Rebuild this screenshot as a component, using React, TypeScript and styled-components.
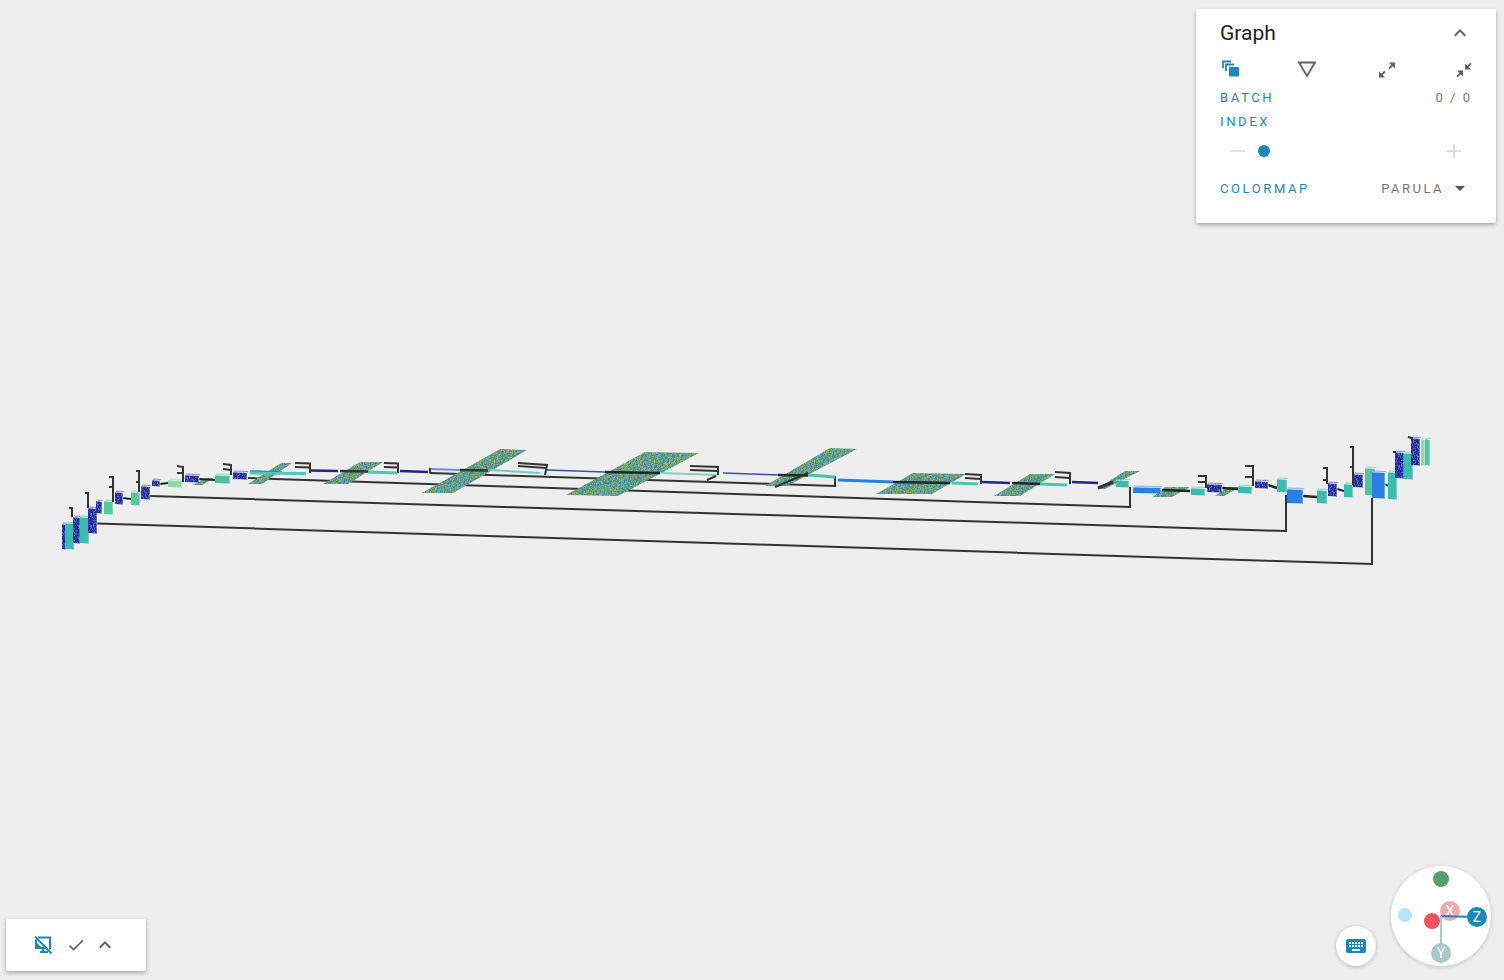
import * as React from 'react'
import styled, { createGlobalStyle } from 'styled-components'
import { MdCheck, MdExpandLess, MdKeyboard } from 'react-icons/md'

const accent = '#1c88b8'
const iconGrey = '#5f5f5f'

const GlobalStyle = createGlobalStyle`
  html, body {
    margin: 0;
    padding: 0;
    background: #eeeeee;
    overflow: hidden;
    font-family: Roboto, "Liberation Sans", sans-serif;
  }
`

const Page = styled.div`
  position: relative;
  width: 1504px;
  height: 980px;
  background: #eeeeee;
  overflow: hidden;
`

const Canvas = styled.svg`
  display: block;
  width: 1504px;
  height: 980px;
  filter: blur(0.35px);
`

const GraphPanel = styled.section`
  position: absolute;
  top: 9px;
  left: 1196px;
  width: 300px;
  height: 214px;
  box-sizing: border-box;
  padding: 8px 24px 0;
  background: #fff;
  border-radius: 2px;
  box-shadow: 0 2px 4px rgba(0, 0, 0, 0.3);
`

const Header = styled.div`
  display: flex;
  align-items: center;
  justify-content: space-between;
  height: 32px;
`

const Title = styled.div`
  font-size: 21px;
  color: #212121;
`

const IconRow = styled.div`
  display: flex;
  align-items: center;
  justify-content: space-between;
  height: 24px;
  margin: 8px -2px 4px 0;
`

const IconSlot = styled.svg`
  display: block;
  width: 20px;
  height: 20px;
`

const Row = styled.div<{ $height?: number }>`
  display: flex;
  align-items: center;
  justify-content: space-between;
  height: ${props => props.$height || 24}px;
`

const Label = styled.span`
  font-size: 13px;
  letter-spacing: 2.6px;
  color: ${accent};
`

const Value = styled.span`
  font-size: 13px;
  letter-spacing: 2px;
  color: #777;
`

const SelectValue = styled(Value)`
  letter-spacing: 2.5px;
`

const SliderRow = styled.div`
  display: flex;
  align-items: center;
  height: 36px;
  padding: 0 11px 0 11px;
`

const SliderTrack = styled.div`
  flex: 1;
  display: flex;
  align-items: center;
  padding-left: 13px;
`

const Thumb = styled.div`
  width: 12px;
  height: 12px;
  border-radius: 50%;
  background: ${accent};
`

const Select = styled.div`
  display: flex;
  align-items: center;
  gap: 11px;
  padding-right: 7px;
`

const Caret = styled.div`
  width: 0;
  height: 0;
  border-left: 5px solid transparent;
  border-right: 5px solid transparent;
  border-top: 5px solid #555;
`

const Toolbar = styled.div`
  position: absolute;
  left: 6px;
  top: 919px;
  width: 140px;
  height: 52px;
  display: flex;
  align-items: center;
  padding-left: 27px;
  box-sizing: border-box;
  background: #fff;
  border-radius: 2px;
  box-shadow: 0 2px 4px rgba(0, 0, 0, 0.3);
`

const ToolIcon = styled.div<{ $color?: string; $width: number }>`
  display: flex;
  justify-content: center;
  width: ${props => props.$width}px;
  color: ${props => props.$color || iconGrey};
  & > svg {
    flex-shrink: 0;
  }
`

const KeyboardButton = styled.div`
  position: absolute;
  left: 1336px;
  top: 926px;
  width: 40px;
  height: 40px;
  display: flex;
  align-items: center;
  justify-content: center;
  color: ${accent};
  background: #fff;
  border-radius: 50%;
  box-shadow: 0 1px 4px rgba(0, 0, 0, 0.25);
`

const Gizmo = styled.svg`
  position: absolute;
  left: 1391px;
  top: 866px;
  width: 100px;
  height: 100px;
  border-radius: 50%;
  background: #fff;
  box-shadow: 0 1px 4px rgba(0, 0, 0, 0.2);
`

const AxisText = styled.text`
  font-family: Roboto, "Liberation Sans", sans-serif;
  font-size: 14px;
  fill: #fff;
  text-anchor: middle;
`

// seeded so the speckle doesn't change between runs
const speckle = (id: string, colors: string[], size: number) => {
  let seed = id.length * 7919 + 13
  const next = () => {
    seed = (seed * 16807) % 2147483647
    return seed / 2147483647
  }
  const cells = []
  for (let y = 0; y < size; y++) {
    for (let x = 0; x < size; x++) {
      cells.push(
        <rect
          key={x + '-' + y}
          x={x}
          y={y}
          width={1}
          height={1}
          fill={colors[Math.floor(next() * colors.length)]}
        />
      )
    }
  }
  return (
    <pattern id={id} width={size} height={size} patternUnits="userSpaceOnUse" key={id}>
      {cells}
    </pattern>
  )
}

const patterns = [
  speckle(
    'noise',
    ['#4a9c9c', '#5ea68e', '#6f9f80', '#4f9295', '#86ab72', '#4a8a9a', '#5aa395', '#7aa578', '#a8ae5c', '#4d84a4'],
    40
  ),
  speckle('navyFill', ['#2a2f96', '#2d3a9f', '#27288a', '#3450b8', '#2a2f96', '#4a6fd0'], 12),
]

// parallelogram sheets, top edge then bottom edge
const sheets: number[][] = [
  [281, 463, 292, 463, 262, 484, 248, 484],
  [360, 462, 383, 462, 348, 484, 323, 484],
  [500, 449, 527, 450, 453, 493, 422, 493],
  [645, 452, 699, 453, 618, 496, 566, 495],
  [830, 448, 857, 449, 787, 486, 765, 486],
  [913, 473, 966, 474, 932, 494, 876, 494],
  [1030, 474, 1055, 474, 1020, 496, 994, 496],
  [1125, 471, 1140, 471, 1105, 489, 1097, 489],
  [1165, 487, 1190, 487, 1172, 497, 1153, 497],
  [1228, 487, 1240, 487, 1224, 496, 1215, 496],
  [205, 478, 214, 478, 202, 485, 193, 485],
]

const teal = '#3cbcb0'
const green = '#55c8a0'
const lime = '#8fd8a8'
const navy = 'url(#navyFill)'
const blue = '#2a80e0'

// x, y, width, height, fill
const blocks: [number, number, number, number, string][] = [
  [62, 524, 4, 25, navy],
  [65, 523, 9, 26, teal],
  [73, 517, 7, 26, navy],
  [80, 517, 9, 26, teal],
  [88, 508, 9, 25, navy],
  [96, 501, 6, 12, navy],
  [104, 501, 9, 13, green],
  [115, 492, 8, 12, navy],
  [131, 492, 9, 13, green],
  [141, 486, 9, 13, navy],
  [152, 480, 8, 6, navy],
  [168, 480, 14, 7, lime],
  [185, 475, 14, 7, navy],
  [215, 475, 15, 8, '#4cc0a8'],
  [233, 472, 14, 7, navy],
  [1116, 480, 13, 7, teal],
  [1133, 487, 28, 6, blue],
  [1191, 488, 14, 7, teal],
  [1207, 484, 15, 8, navy],
  [1238, 486, 14, 7, teal],
  [1255, 481, 13, 7, navy],
  [1277, 479, 10, 13, teal],
  [1287, 489, 16, 14, blue],
  [1317, 490, 10, 13, teal],
  [1328, 483, 9, 13, navy],
  [1344, 484, 9, 13, teal],
  [1353, 474, 10, 13, navy],
  [1365, 468, 10, 27, '#50c4a4'],
  [1372, 472, 13, 26, blue],
  [1388, 472, 9, 27, teal],
  [1395, 452, 9, 26, navy],
  [1404, 453, 9, 26, teal],
  [1411, 438, 9, 27, navy],
  [1421, 439, 4, 26, lime],
  [1425, 439, 5, 26, '#50c4a4'],
]

const dark = '#333333'
const thinBlue = '#3a5fc0'
const deep = '#23238c'

// x1, y1, x2, y2, colour, width
const spine: [number, number, number, number, string, number][] = [
  [250, 471, 282, 472, thinBlue, 1.5],
  [250, 473, 306, 473.5, '#4cc8bc', 3],
  [311, 470.5, 338, 471, deep, 2.5],
  [340, 471, 368, 471.5, dark, 2.5],
  [368, 472, 397, 473, '#4cc8b0', 3],
  [400, 471, 428, 472, deep, 2.5],
  [430, 469, 460, 470, '#6f90d8', 2],
  [460, 470, 488, 470.5, dark, 2.5],
  [490, 470, 540, 473, '#6cd0c4', 2],
  [547, 470, 605, 472, '#3850a8', 1.5],
  [605, 472, 660, 473, '#1e2a22', 2.5],
  [660, 473, 717, 475, '#7ad4c4', 2],
  [723, 473, 778, 475, '#3850b0', 1.5],
  [778, 475, 808, 475.5, '#1e2a22', 2.5],
  [808, 475, 835, 477, '#46c4a8', 3],
  [838, 480, 893, 482, blue, 3],
  [893, 482, 950, 483, '#1e2a22', 2.5],
  [952, 483, 978, 484, '#48c8b0', 3],
  [982, 482, 1010, 483, deep, 2.5],
  [1012, 483, 1040, 484, '#1e2a22', 2.5],
  [1040, 484, 1067, 485, '#48c8b0', 3],
  [1072, 482, 1098, 483, deep, 2.5],
  [1098, 488, 1113, 482, dark, 3],
  [1162, 490, 1190, 491, '#1e2a22', 2.5],
  [1222, 488, 1238, 489, '#1e2a22', 2.5],
  [1268, 485, 1277, 488, '#1e2a22', 2.5],
  [1303, 496, 1317, 497, '#1e2a22', 2.5],
  [1337, 489, 1344, 491, '#1e2a22', 2],
  [199, 479, 215, 480, '#1e2a22', 2],
  [160, 484, 168, 483, '#1e2a22', 2],
  [123, 498, 131, 499, '#1e2a22', 2],
  [1385, 484, 1388, 486, '#1e2a22', 2],
  [707, 480, 716, 476, dark, 2],
  [775, 487, 808, 473, dark, 2],
]

// the skip connections and their small brackets, as polylines
const wires = [
  '97,523.5 1372,564 1372,498',
  '150,496 1286,531 1286,495',
  '248,478 1130,507 1130,487',
  '430,473 835,486 835,476',
  '69,508 72,508 72,517',
  '85,493 88,493 88,508',
  '109,477 113,477 113,502',
  '109,487 113,487',
  '136,471 139,471 139,492',
  '136,482 139,482',
  '177,466 183,467 183,482',
  '177,473 183,473',
  '223,464 231,465 231,475',
  '223,469 231,470',
  '295,463 310,463.5 310,473',
  '295,467 310,467.5',
  '384,463 398,463.5 398,473',
  '384,467 398,467.5',
  '430,468 430,473',
  '518,463 547,465 545,475',
  '518,466 546,468',
  '690,466 718,467 718,475',
  '690,470 718,471',
  '965,474 981,475 981,484',
  '965,478 981,479',
  '1055,472 1070,473 1070,484',
  '1055,477 1070,478',
  '1198,476 1206,476 1206,488',
  '1198,482 1206,482',
  '1245,466 1253,466 1253,486',
  '1245,477 1253,477',
  '1323,468 1327,468 1327,484',
  '1323,480 1327,480',
  '1350,447 1353,447 1353,485',
  '1350,467 1353,467',
  '1408,437 1412,438 1412,441',
  '1393,452 1396,452',
]

const Graph = () => (
  <Canvas viewBox="0 0 1504 980">
    <defs>{patterns}</defs>
    {wires.slice(0, 4).map(points => (
      <polyline key={points} points={points} fill="none" stroke={dark} strokeWidth={2} />
    ))}
    {sheets.map(s => (
      <polygon
        key={s.join()}
        points={`${s[0]},${s[1]} ${s[2]},${s[3]} ${s[4]},${s[5]} ${s[6]},${s[7]}`}
        fill="url(#noise)"
      />
    ))}
    {spine.map(([x1, y1, x2, y2, color, width]) => (
      <line key={`${x1}-${y1}`} x1={x1} y1={y1} x2={x2} y2={y2} stroke={color} strokeWidth={width} />
    ))}
    {blocks.map(([x, y, w, h, fill]) => (
      <g key={`${x}-${y}`}>
        {/* top face, then the front with a slight tilt */}
        <polygon points={`${x},${y} ${x + w},${y + 0.5} ${x + w + 1.5},${y - 1} ${x + 1.5},${y - 1.5}`} fill={fill} opacity={0.5} />
        <polygon points={`${x},${y} ${x + w},${y + 0.5} ${x + w},${y + h + 0.5} ${x},${y + h}`} fill={fill} />
        <path d={`M${x} ${y}L${x + w} ${y + 0.5}V${y + h}`} fill="none" stroke="#fff" strokeOpacity={0.6} strokeWidth={1} />
      </g>
    ))}
    {wires.slice(4).map(points => (
      <polyline key={points} points={points} fill="none" stroke={dark} strokeWidth={2} />
    ))}
  </Canvas>
)

const BatchIcon = () => (
  <IconSlot viewBox="0 0 20 20" fill="none" stroke={accent} strokeWidth={1.8}>
    <path d="M3 9V2.5H11" />
    <path d="M6 12V5.5H14" />
    <rect x={9} y={8} width={10} height={9.5} rx={1.2} fill={accent} stroke="none" />
  </IconSlot>
)

const FilterIcon = () => (
  <IconSlot viewBox="0 0 20 20" fill="none" stroke={iconGrey} strokeWidth={1.8}>
    <path d="M1 3.5h16L9 17z" />
  </IconSlot>
)

const ExpandIcon = () => (
  <IconSlot viewBox="0 0 20 20" fill={iconGrey}>
    <path d="M13 3.5h6v6l-2.2-2.2-3.1 3-1.3-1.3 3-3.1z" />
    <path d="M9 18.5H3v-6l2.2 2.2 3.1-3 1.3 1.3-3 3.1z" />
  </IconSlot>
)

const CollapseIcon = () => (
  <IconSlot viewBox="0 0 20 20" fill={iconGrey}>
    <path d="M17 10.5h-6v-6l2.2 2.2 3.1-3 1.3 1.3-3 3.1z" />
    <path d="M3 11.5h6v6l-2.2-2.2-3.1 3-1.3-1.3 3-3.1z" />
  </IconSlot>
)

const DisabledDisplay = () => (
  <svg width={20} height={20} viewBox="0 0 20 20" fill="none" stroke={accent}>
    <path d="M5 2.5h12v11.5" strokeWidth={2} />
    <path d="M3 4.5v8.5h10" strokeWidth={2} />
    <path d="M7 17h8M10 13v4" strokeWidth={2} />
    <path d="M2 1.5L18.5 18.5" strokeWidth={1.8} />
    <path d="M4 8l5 5H4z" fill={accent} stroke="none" />
  </svg>
)

const Minus = () => (
  <svg width={14} height={14} viewBox="0 0 14 14" stroke="#d4d4d4" strokeWidth={1.5}>
    <path d="M0 7h14" />
  </svg>
)

const Plus = () => (
  <svg width={14} height={14} viewBox="0 0 14 14" stroke="#d4d4d4" strokeWidth={1.5}>
    <path d="M0 7h14M7 0v14" />
  </svg>
)

const App = () => (
  <Page>
    <GlobalStyle />
    <Graph />

    <GraphPanel>
      <Header>
        <Title>Graph</Title>
        <MdExpandLess size={24} color={iconGrey} />
      </Header>
      <IconRow>
        <BatchIcon />
        <FilterIcon />
        <ExpandIcon />
        <CollapseIcon />
      </IconRow>
      <Row>
        <Label>BATCH</Label>
        <Value>0 / 0</Value>
      </Row>
      <Row>
        <Label>INDEX</Label>
      </Row>
      <SliderRow>
        <Minus />
        <SliderTrack>
          <Thumb />
        </SliderTrack>
        <Plus />
      </SliderRow>
      <Row $height={38}>
        <Label>COLORMAP</Label>
        <Select>
          <SelectValue>PARULA</SelectValue>
          <Caret />
        </Select>
      </Row>
    </GraphPanel>

    <Toolbar>
      <ToolIcon $color={accent} $width={20}>
        <DisabledDisplay />
      </ToolIcon>
      <ToolIcon $width={46}>
        <MdCheck size={20} />
      </ToolIcon>
      <ToolIcon $width={12}>
        <MdExpandLess size={24} />
      </ToolIcon>
    </Toolbar>

    <KeyboardButton>
      <MdKeyboard size={24} />
    </KeyboardButton>

    <Gizmo viewBox="0 0 100 100">
      <circle cx={50} cy={13} r={8} fill="#5a9e6e" />
      <circle cx={14} cy={49} r={7} fill="#b3e5fc" />
      <circle cx={59} cy={45} r={10} fill="#ecabb2" />
      <AxisText x={59} y={50}>X</AxisText>
      <circle cx={41} cy={55} r={8} fill="#ef5360" />
      <line x1={50} y1={50} x2={86} y2={51} stroke={accent} strokeWidth={2} />
      <line x1={50} y1={50} x2={50} y2={87} stroke="#a9c9c1" strokeWidth={2} />
      <circle cx={86} cy={51} r={10} fill={accent} />
      <AxisText x={86} y={56}>Z</AxisText>
      <circle cx={50} cy={87} r={10} fill="#a9c9c1" />
      <AxisText x={50} y={92}>Y</AxisText>
    </Gizmo>
  </Page>
)

export default App
